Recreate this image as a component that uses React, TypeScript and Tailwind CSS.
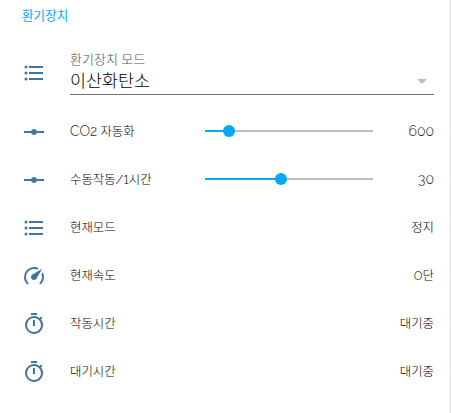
import React from "react";

const ICONS = {
  list: "M7,5H21V7H7V5M7,13V11H21V13H7M4,4.5A1.5,1.5 0 0,1 5.5,6A1.5,1.5 0 0,1 4,7.5A1.5,1.5 0 0,1 2.5,6A1.5,1.5 0 0,1 4,4.5M4,10.5A1.5,1.5 0 0,1 5.5,12A1.5,1.5 0 0,1 4,13.5A1.5,1.5 0 0,1 2.5,12A1.5,1.5 0 0,1 4,10.5M7,19V17H21V19H7M4,16.5A1.5,1.5 0 0,1 5.5,18A1.5,1.5 0 0,1 4,19.5A1.5,1.5 0 0,1 2.5,18A1.5,1.5 0 0,1 4,16.5Z",
  ray: "M22,11H14.82C14.4,9.84 13.3,9 12,9C10.7,9 9.6,9.84 9.18,11H2V13H9.18C9.6,14.16 10.7,15 12,15C13.3,15 14.4,14.16 14.82,13H22V11Z",
  speed:
    "M12,16A3,3 0 0,1 9,13C9,11.88 9.61,10.9 10.5,10.39L20.21,4.77L14.68,14.35C14.18,15.33 13.17,16 12,16M12,3C13.81,3 15.5,3.5 16.97,4.32L14.87,5.53C14,5.19 13,5 12,5A8,8 0 0,0 4,13C4,15.21 4.89,17.21 6.34,18.65H6.35C6.74,19.04 6.74,19.67 6.35,20.06C5.96,20.45 5.32,20.45 4.93,20.07V20.07C3.12,18.26 2,15.76 2,13A10,10 0 0,1 12,3M22,13C22,15.76 20.88,18.26 19.07,20.07V20.07C18.68,20.45 18.05,20.45 17.66,20.06C17.27,19.67 17.27,19.04 17.66,18.65V18.65C19.11,17.2 20,15.21 20,13C20,12 19.81,11 19.46,10.1L20.67,8C21.5,9.5 22,11.18 22,13Z",
  timer:
    "M12,20A7,7 0 0,1 5,13A7,7 0 0,1 12,6A7,7 0 0,1 19,13A7,7 0 0,1 12,20M19.03,7.39L20.45,5.97C20,5.46 19.55,5 19.04,4.56L17.62,6C16.07,4.74 14.12,4 12,4A9,9 0 0,0 3,13A9,9 0 0,0 12,22C17,22 21,17.97 21,13C21,10.88 20.26,8.93 19.03,7.39M11,14H13V8H11M15,1H9V3H15V1Z",
};

type IconName = keyof typeof ICONS;

interface Entity {
  icon: IconName;
  name: string;
  value: string;
  percent?: number;
}

const ENTITIES: Entity[] = [
  { icon: "ray", name: "CO2 자동화", value: "600", percent: 14.3 },
  { icon: "ray", name: "수동작동/1시간", value: "30", percent: 45.2 },
  { icon: "list", name: "현재모드", value: "정지" },
  { icon: "speed", name: "현재속도", value: "0단" },
  { icon: "timer", name: "작동시간", value: "대기중" },
  { icon: "timer", name: "대기시간", value: "대기중" },
];

function Icon({ name }: { name: IconName }) {
  return (
    <svg viewBox="0 0 24 24" className="size-6 shrink-0 fill-[#44739e]">
      <path d={ICONS[name]} />
    </svg>
  );
}

// Latin runs are set larger than the Hangul around them
function latinStyle(part: string): string {
  if (/^[A-Z]/.test(part)) return "text-[14px] text-[#212121]";
  if (/^\//.test(part)) return "text-[13.5px] lining-nums";
  if (part === "0") return "text-[13px] lining-nums";
  if (/^\d+$/.test(part)) return "text-[14px] text-[#212121]";
  return "";
}

function MixedText({ text }: { text: string }) {
  const parts = text.match(/[A-Z0-9/]+|[^A-Z0-9/]+/g) ?? [];
  return (
    <>
      {parts.map((part, i) => (
        <span key={i} className={latinStyle(part)}>
          {part}
        </span>
      ))}
    </>
  );
}

function Slider({ percent }: { percent: number }) {
  return (
    <div className="relative -top-px flex h-3 w-[168px] items-center">
      <div className="h-0.5 w-full bg-[#bdbdbd]">
        <div className="h-full bg-[#03a9f4]" style={{ width: `${percent}%` }} />
      </div>
      <div
        className="absolute top-0 size-3 -translate-x-1/2 rounded-full bg-[#03a9f4]"
        style={{ left: `${percent}%` }}
      />
    </div>
  );
}

function EntityRow({ entity }: { entity: Entity }) {
  const textPad = entity.percent !== undefined ? "pb-0.5" : "";
  return (
    <div className="flex h-10 items-center">
      <Icon name={entity.icon} />
      <span className={`ml-6 w-[135px] whitespace-nowrap ${textPad}`}>
        <MixedText text={entity.name} />
      </span>
      {entity.percent !== undefined && <Slider percent={entity.percent} />}
      <span className={`ml-auto whitespace-nowrap ${textPad}`}>
        <MixedText text={entity.value} />
      </span>
    </div>
  );
}

export default function App() {
  return (
    <div className="h-[413px] w-[451px] border-r border-[#e0e0e0] bg-white pl-[22px] pr-4 font-['Raleway','Lato','Noto_Sans_CJK_KR',sans-serif] text-[12.4px] font-light leading-5 text-black">
      <h2 className="pt-1.5 text-[12.6px] font-normal leading-5 text-[#03a9f4]">환기장치</h2>

      {/* Mode select */}
      <div className="mt-[23px] flex h-[46px]">
        <div className="pt-3">
          <Icon name="list" />
        </div>
        <div className="ml-6 flex flex-1 flex-col border-b border-[#737373]">
          <span className="h-5 pt-px text-[13px] leading-5 text-[#505050]">환기장치 모드</span>
          <div className="flex items-center justify-between pt-px">
            <span className="text-[17.4px] leading-[22px]">이산화탄소</span>
            <svg viewBox="0 0 10 5" className="mr-[7px] h-[5px] w-2.5 fill-[#bdbdbd]">
              <path d="M0 0h10L5 5z" />
            </svg>
          </div>
        </div>
      </div>

      <div className="mt-[17px] flex flex-col gap-2">
        {ENTITIES.map((entity) => (
          <EntityRow key={entity.name} entity={entity} />
        ))}
      </div>
    </div>
  );
}
